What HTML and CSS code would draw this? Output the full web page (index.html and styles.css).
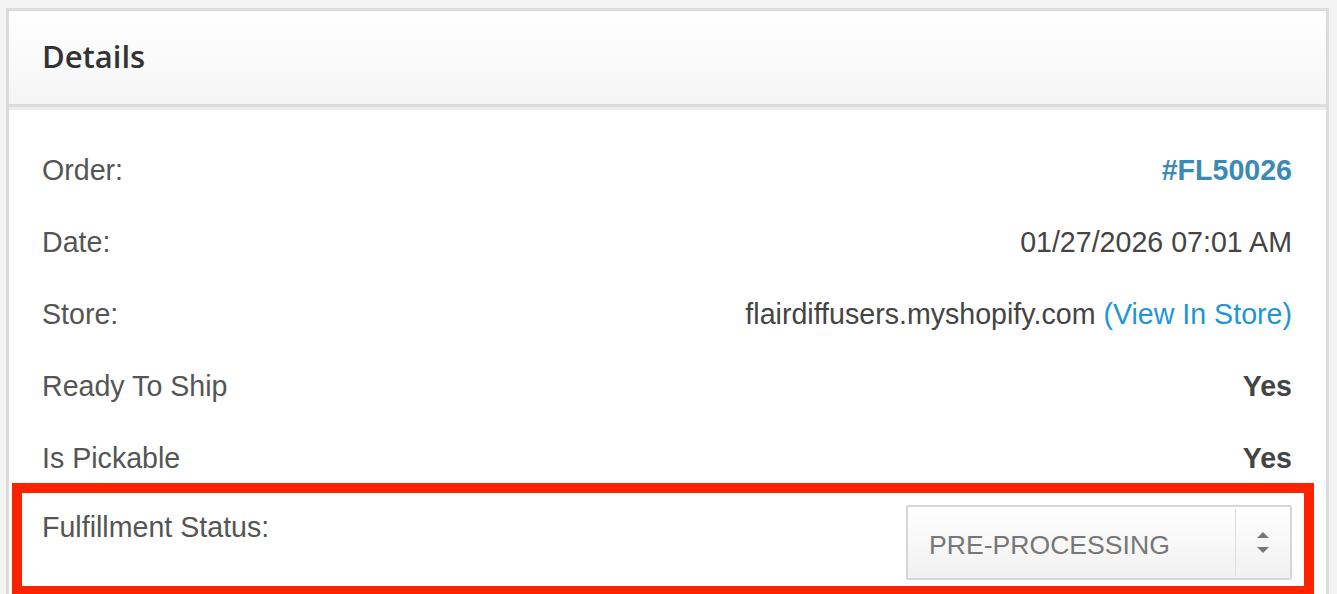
FILE: index.html
```html
<!DOCTYPE html>
<html>
<head>
<meta charset="utf-8">
<link rel="stylesheet" href="styles.css">
</head>
<body>
<div class="card">
  <div class="card-header"><h2 class="title">Details</h2></div>
  <div class="card-body">
    <div class="row"><span class="label">Order:</span><a class="order-link">#FL50026</a></div>
    <div class="row"><span class="label">Date:</span><span class="value">01/27/2026 07:01 AM</span></div>
    <div class="row"><span class="label">Store:</span><span class="value">flairdiffusers.myshopify.com <a class="store-link">(View In Store)</a></span></div>
    <div class="row"><span class="label">Ready To Ship</span><span class="value bold">Yes</span></div>
    <div class="row"><span class="label">Is Pickable</span><span class="value bold">Yes</span></div>
    <div class="row row-status">
      <span class="label label-status">Fulfillment Status:</span>
      <div class="select">
        <span class="select-text">PRE-PROCESSING</span>
        <span class="select-arrows"><span class="arrow-up"></span><span class="arrow-down"></span></span>
      </div>
      <div class="highlight"></div>
    </div>
  </div>
</div>
</body>
</html>
```
FILE: styles.css
```css
html, body {
  margin: 0;
  padding: 0;
}
body {
  background: #f3f3f3;
  font-family: "Liberation Sans", Arial, sans-serif;
  overflow: hidden;
  height: 594px;
}
.card {
  margin: 8px 0 0 6px;
  width: 1317px;
  border: 3px solid #dcdcdc;
  background: #fff;
}
.card-header {
  height: 93px;
  display: flex;
  align-items: center;
  padding-left: 33px;
  background: linear-gradient(#ffffff, #f5f5f5);
  border-bottom: 3px solid #dcdcdc;
}
.title {
  margin: 0;
  font-family: "Open Sans", sans-serif;
  font-weight: 600;
  font-size: 31px;
  color: #333;
  position: relative;
  top: -2px;
}
.card-body {
  border-top: 3px solid #ececec;
  padding: 24px 34px 0 33px;
}
.row {
  height: 72px;
  display: flex;
  align-items: center;
  justify-content: space-between;
  font-size: 28.6px;
  line-height: 32px;
}
.label {
  color: #555;
}
.value {
  color: #444;
}
.bold {
  font-weight: bold;
}
.order-link {
  color: #3a8ab3;
  font-weight: bold;
}
.store-link {
  color: #2196d3;
}
.row-status {
  position: relative;
  height: auto;
  align-items: flex-start;
  padding: 11px 0 14px;
}
.label-status {
  padding-top: 6px;
}
.select {
  width: 382px;
  height: 71px;
  border: 2px solid #d6d6d6;
  border-radius: 2px;
  background: linear-gradient(#ffffff, #f1f1f1);
  display: flex;
  align-items: stretch;
}
.select-text {
  flex: 1;
  display: flex;
  align-items: center;
  padding: 4px 0 0 21px;
  font-size: 26.6px;
  color: #777;
  border-right: 1px solid #dedede;
  margin: 2px 0;
}
.select-arrows {
  width: 54px;
  display: flex;
  flex-direction: column;
  align-items: center;
  justify-content: center;
  gap: 9px;
}
.arrow-up {
  width: 0;
  height: 0;
  border-left: 6px solid transparent;
  border-right: 6px solid transparent;
  border-bottom: 6px solid #777;
}
.arrow-down {
  width: 0;
  height: 0;
  border-left: 6px solid transparent;
  border-right: 6px solid transparent;
  border-top: 6px solid #777;
}
.highlight {
  position: absolute;
  left: -30px;
  right: -22px;
  top: -11px;
  height: 113px;
  box-sizing: border-box;
  border: 10px solid #fe2200;
  pointer-events: none;
}
```
